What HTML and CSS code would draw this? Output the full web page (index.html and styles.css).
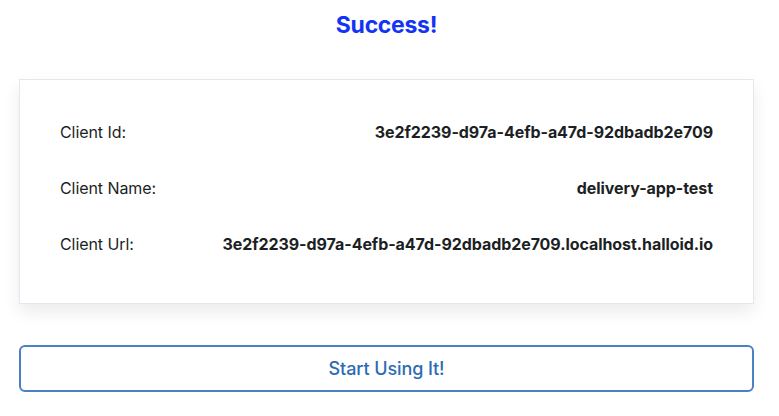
FILE: index.html
```html
<!DOCTYPE html>
<html>
<head>
<meta charset="utf-8">
<link rel="stylesheet" href="styles.css">
</head>
<body>
<div class="page">
  <h1 class="title">Success!</h1>
  <div class="card">
    <div class="row"><span class="label">Client Id:</span><span class="value">3e2f2239-d97a-4efb-a47d-92dbadb2e709</span></div>
    <div class="row"><span class="label">Client Name:</span><span class="value">delivery-app-test</span></div>
    <div class="row"><span class="label">Client Url:</span><span class="value">3e2f2239-d97a-4efb-a47d-92dbadb2e709.localhost.halloid.io</span></div>
  </div>
  <button class="btn">Start Using It!</button>
</div>
</body>
</html>
```
FILE: styles.css
```css
html, body {
  margin: 0;
  padding: 0;
  background: #ffffff;
}
body {
  font-family: Inter, "Liberation Sans", sans-serif;
  color: #1c1f24;
}
.page {
  padding: 9px 25px 0 19px;
  display: flex;
  flex-direction: column;
}
.title {
  margin: 0;
  text-align: center;
  font-size: 23px;
  font-weight: 700;
  line-height: 33px;
  letter-spacing: -0.3px;
  color: #1434f5;
}
.card {
  margin-top: 37px;
  border: 1px solid #e4e8ee;
  background: #fff;
  box-shadow: 0 8px 16px rgba(0, 0, 0, 0.08);
  padding: 40px 40px 47px 40px;
  display: flex;
  flex-direction: column;
  gap: 32px;
}
.row {
  display: flex;
  justify-content: space-between;
  align-items: center;
  height: 24px;
  font-size: 16px;
  letter-spacing: -0.07px;
}
.label {
  font-weight: 400;
}
.value {
  font-weight: 700;
}
.btn {
  margin-top: 41px;
  height: 47px;
  border: 2px solid #4a81c2;
  border-radius: 6px;
  background: #fff;
  color: #2d6bb4;
  font-family: Inter, "Liberation Sans", sans-serif;
  font-size: 18px;
  font-weight: 500;
  letter-spacing: -0.1px;
  cursor: pointer;
}
```
